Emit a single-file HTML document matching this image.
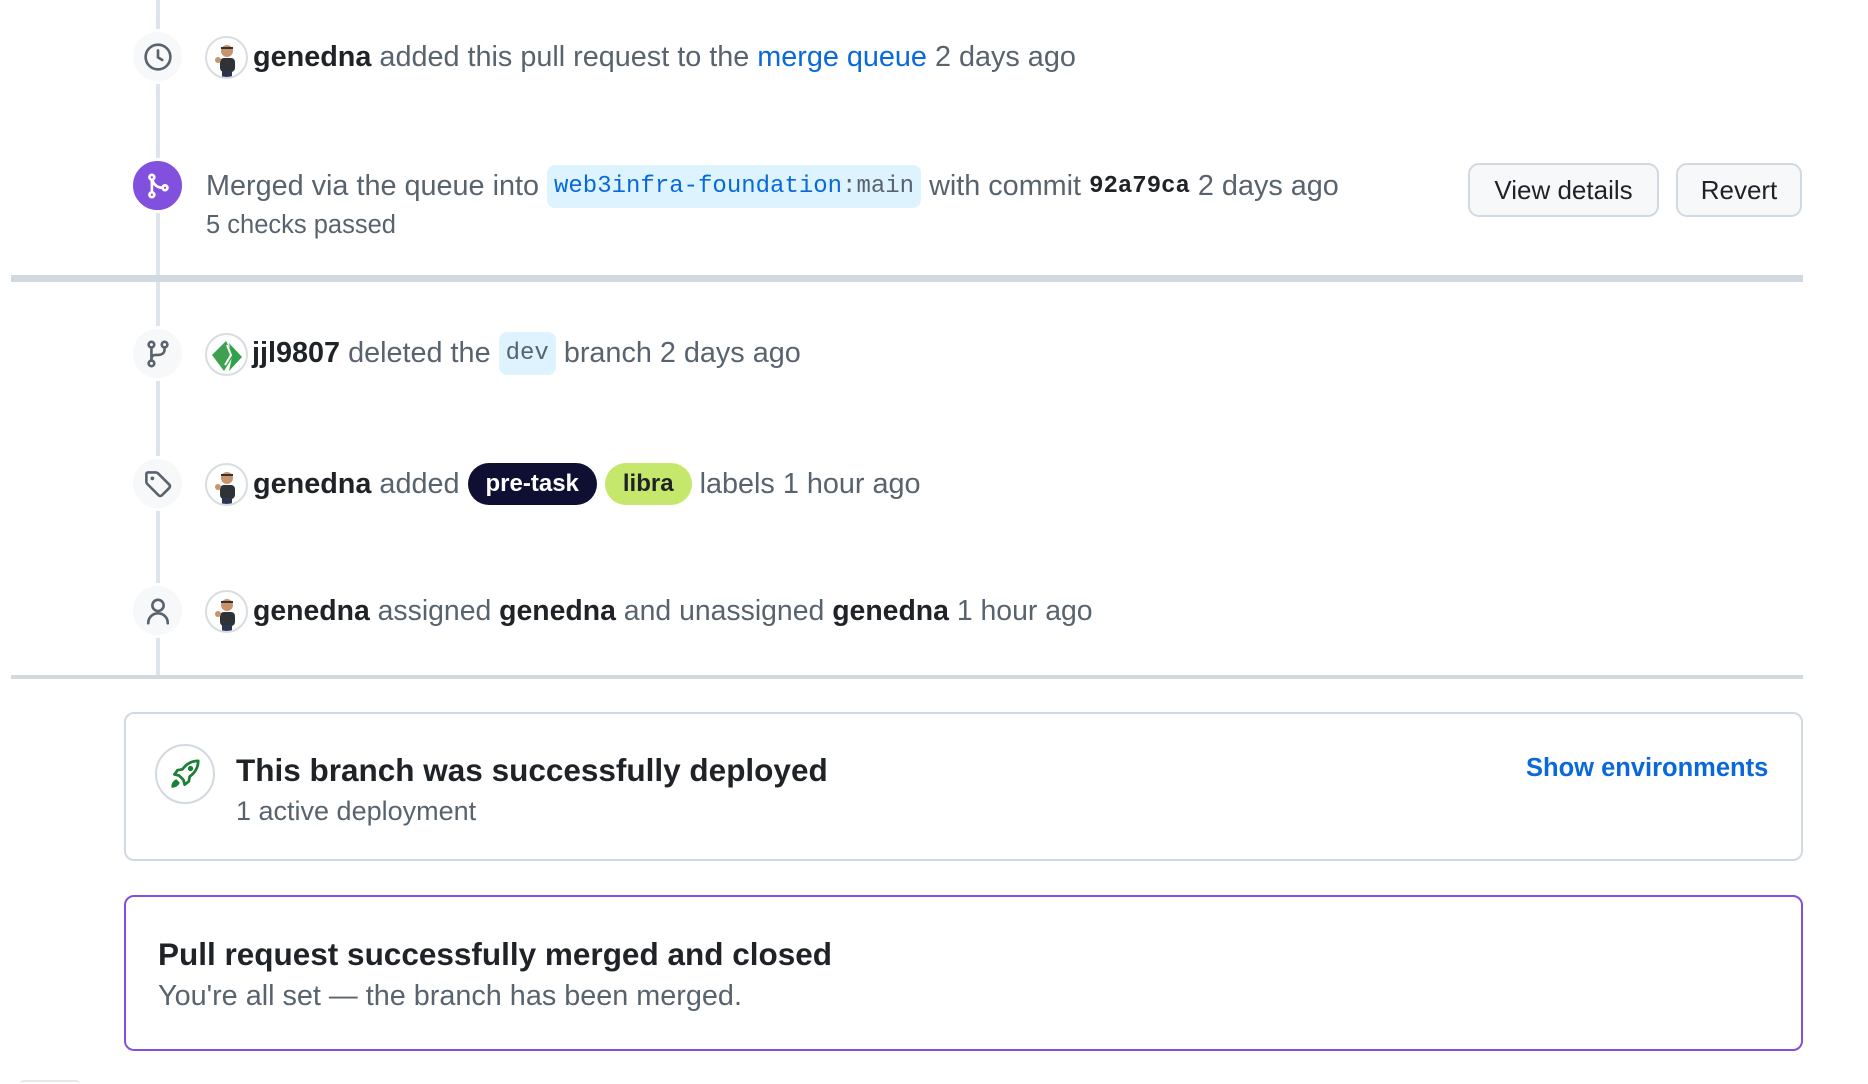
<!DOCTYPE html>
<html style="width:1868px;height:1084px;overflow:hidden"><head><meta charset="utf-8"><style>
*{margin:0;padding:0;box-sizing:border-box}
body{width:1868px;height:1084px;background:#fff;position:relative;overflow:hidden;font-family:"Liberation Sans",Arial,sans-serif;color:#59636e}
.abs{position:absolute}
.line{position:absolute;left:156px;width:4px;background:#dfe4ea}
.ic{position:absolute;left:130px;width:55px;height:55px;border-radius:50%;background:#f6f8fa;border:3px solid #fff;display:flex;align-items:center;justify-content:center}
.av{position:absolute;left:205px;width:43px;height:43px;border-radius:50%;border:2px solid #d8dde2;background:#fff;overflow:hidden}
.row{position:absolute;left:253px;font-size:28.8px;white-space:nowrap;display:flex;align-items:center;height:44px}
.row b{color:#1f2328;font-weight:700}
.row span{margin-right:8px}
.sep{position:absolute;left:11px;width:1792px;background:#d1d9e0}
.btn{position:absolute;top:163px;height:54px;border:2px solid #d1d9e0;border-radius:11px;background:#f6f8fa;color:#1f2328;font-size:26px;display:flex;align-items:center;justify-content:center}
.code{background:#ddf4ff;border-radius:8px;font-family:"Liberation Mono",monospace;font-size:24px;padding:0 7px;height:43px;display:inline-flex;align-items:center}
.lbl{border-radius:22px;height:42px;display:inline-flex;align-items:center;padding:0 18px;font-size:24px;font-weight:700}
</style></head><body>
<div class="line" style="top:0;height:282px"></div>
<div class="line" style="top:282px;height:395px"></div>

<div class="sep" style="top:275px;height:7px"></div>
<div class="sep" style="top:675px;height:4px"></div>

<!-- row1 -->
<div class="ic" style="top:29px"><svg width="30" height="30" viewBox="0 0 16 16" fill="none" stroke="#59636e" stroke-width="1.4" stroke-linecap="round"><circle cx="8" cy="8" r="6.6"/><path d="M8 4.5V8.2l2.3 1.4"/></svg></div>
<div class="av" style="top:36px"><svg width="43" height="43" viewBox="0 0 43 43"><circle cx="20" cy="13" r="6" fill="#c9946b"/><path d="M14 10h12" stroke="#333" stroke-width="2"/><rect x="13" y="20" width="15" height="14" rx="4" fill="#2f3338"/><rect x="15" y="33" width="10" height="8" fill="#2b3550"/><circle cx="11" cy="22" r="3" fill="#c9946b"/></svg></div>
<div class="row" style="top:35px"><b>genedna</b>&nbsp;added this pull request to the&nbsp;<span style="color:#0969da;margin:0">merge queue</span>&nbsp;2 days ago</div>

<!-- row2 merged -->
<div class="ic" style="top:158px;background:#8250df;border-color:#fff"><svg width="28" height="28" viewBox="0 0 16 16" fill="none" stroke="#fff" stroke-width="1.5" stroke-linecap="round"><circle cx="4.5" cy="3" r="1.4"/><circle cx="4.5" cy="13" r="1.4"/><circle cx="12" cy="9" r="1.4"/><path d="M4.5 4.4v7.2M4.8 4.4c.6 2.8 2.8 4.6 5.8 4.6"/></svg></div>
<div class="row" style="top:164px;left:206px;height:44px">Merged via the queue into&nbsp;<span class="code" style="margin:0"><span style="color:#0969da;margin:0">web3infra-foundation</span><span style="color:#59636e;margin:0">:main</span></span>&nbsp;with commit&nbsp;<b style="font-family:'Liberation Mono',monospace;font-size:24px">92a79ca</b>&nbsp;2 days ago</div>
<div class="abs" style="left:206px;top:211px;font-size:25.5px;color:#59636e">5 checks passed</div>
<div class="btn" style="left:1468px;width:191px">View details</div>
<div class="btn" style="left:1676px;width:126px">Revert</div>

<!-- row3 -->
<div class="ic" style="top:326px"><svg width="30" height="30" viewBox="0 0 16 16" fill="none" stroke="#59636e" stroke-width="1.4" stroke-linecap="round"><circle cx="4.5" cy="3" r="1.5"/><circle cx="4.5" cy="13" r="1.5"/><circle cx="11.5" cy="3" r="1.5"/><path d="M4.5 4.5v7M11.5 4.5v1c0 2-1.5 3-3.5 3H6.5c-1 0-2 .8-2 2"/></svg></div>
<div class="av" style="top:333px"><svg width="43" height="43" viewBox="0 0 43 43"><path d="M5 20L19 6l8 14-10 16z" fill="#3fa14f"/><path d="M22 8l13 14-13 14 3-14z" fill="#2fa34a"/><path d="M20 10l4 10-6 10" stroke="#fff" stroke-width="2" fill="none"/></svg></div>
<div class="row" style="top:331px;left:252px"><b>jjl9807</b>&nbsp;deleted the&nbsp;<span class="code" style="margin:0;color:#59636e;font-size:24px">dev</span>&nbsp;branch 2 days ago</div>

<!-- row4 -->
<div class="ic" style="top:456px"><svg width="30" height="30" viewBox="0 0 16 16" fill="none" stroke="#59636e" stroke-width="1.4" stroke-linejoin="round"><path d="M1.8 2.6v4.3c0 .4.2.8.5 1.1l6 6c.5.5 1.3.5 1.8 0l3.9-3.9c.5-.5.5-1.3 0-1.8l-6-6c-.3-.3-.7-.5-1.1-.5H2.6c-.4 0-.8.4-.8.8z"/><circle cx="5" cy="5" r="1" fill="#59636e" stroke="none"/></svg></div>
<div class="av" style="top:463px"><svg width="43" height="43" viewBox="0 0 43 43"><circle cx="20" cy="13" r="6" fill="#c9946b"/><path d="M14 10h12" stroke="#333" stroke-width="2"/><rect x="13" y="20" width="15" height="14" rx="4" fill="#2f3338"/><rect x="15" y="33" width="10" height="8" fill="#2b3550"/><circle cx="11" cy="22" r="3" fill="#c9946b"/></svg></div>
<div class="row" style="top:462px"><b>genedna</b>&nbsp;added&nbsp;<span class="lbl" style="background:#0e0f33;color:#fff">pre-task</span><span class="lbl" style="background:#c5e86c;color:#1f2328;margin-right:8px">libra</span>labels 1 hour ago</div>

<!-- row5 -->
<div class="ic" style="top:583px"><svg width="30" height="30" viewBox="0 0 16 16" fill="none" stroke="#59636e" stroke-width="1.4" stroke-linecap="round"><circle cx="8" cy="5" r="3"/><path d="M2.8 14.5c0-3 2.3-5.3 5.2-5.3s5.2 2.3 5.2 5.3"/></svg></div>
<div class="av" style="top:590px"><svg width="43" height="43" viewBox="0 0 43 43"><circle cx="20" cy="13" r="6" fill="#c9946b"/><path d="M14 10h12" stroke="#333" stroke-width="2"/><rect x="13" y="20" width="15" height="14" rx="4" fill="#2f3338"/><rect x="15" y="33" width="10" height="8" fill="#2b3550"/><circle cx="11" cy="22" r="3" fill="#c9946b"/></svg></div>
<div class="row" style="top:589px;font-size:28.4px"><b>genedna</b>&nbsp;assigned&nbsp;<b>genedna</b>&nbsp;and unassigned&nbsp;<b>genedna</b>&nbsp;1 hour ago</div>

<!-- deploy box -->
<div class="abs" style="left:124px;top:712px;width:1679px;height:149px;border:2px solid #d1d9e0;border-radius:10px"></div>
<div class="abs" style="left:155px;top:744px;width:60px;height:60px;border-radius:50%;border:2px solid #d1d9e0;display:flex;align-items:center;justify-content:center"><svg width="34" height="34" viewBox="0 0 16 16" fill="none" stroke="#1a7f37" stroke-width="1.3" stroke-linejoin="round"><path d="M14.2 1.8c-3 0-5.6 1.5-7.4 4L4.5 6.2 3 8.2l2.2.5 2.1 2.1.5 2.2 2-1.5.4-2.3c2.5-1.8 4-4.4 4-7.4z"/><circle cx="10.6" cy="5.4" r=".6" fill="#1a7f37"/><path d="M3.8 11.2c-1 .5-1.5 1.5-1.6 2.6 1.1-.1 2.1-.6 2.6-1.6z" fill="#1a7f37"/></svg></div>
<div class="abs" style="left:236px;top:752px;font-size:31.5px;font-weight:700;color:#1f2328;white-space:nowrap">This branch was successfully deployed</div>
<div class="abs" style="left:236px;top:796px;font-size:27px;color:#59636e">1 active deployment</div>
<div class="abs" style="left:1526px;top:754px;font-size:25.5px;font-weight:700;color:#0969da;white-space:nowrap">Show environments</div>

<!-- merged box -->
<div class="abs" style="left:124px;top:895px;width:1679px;height:156px;border:2px solid #8250df;border-radius:10px"></div>
<div class="abs" style="left:158px;top:936px;font-size:31.5px;font-weight:700;color:#1f2328;white-space:nowrap">Pull request successfully merged and closed</div>
<div class="abs" style="left:158px;top:980px;font-size:28.8px;color:#59636e;white-space:nowrap">You're all set — the branch has been merged.</div>

<div class="abs" style="left:20px;top:1080px;width:60px;height:4px;border-top:2px solid #e5e8eb;border-radius:30px 30px 0 0"></div>
</body></html>
